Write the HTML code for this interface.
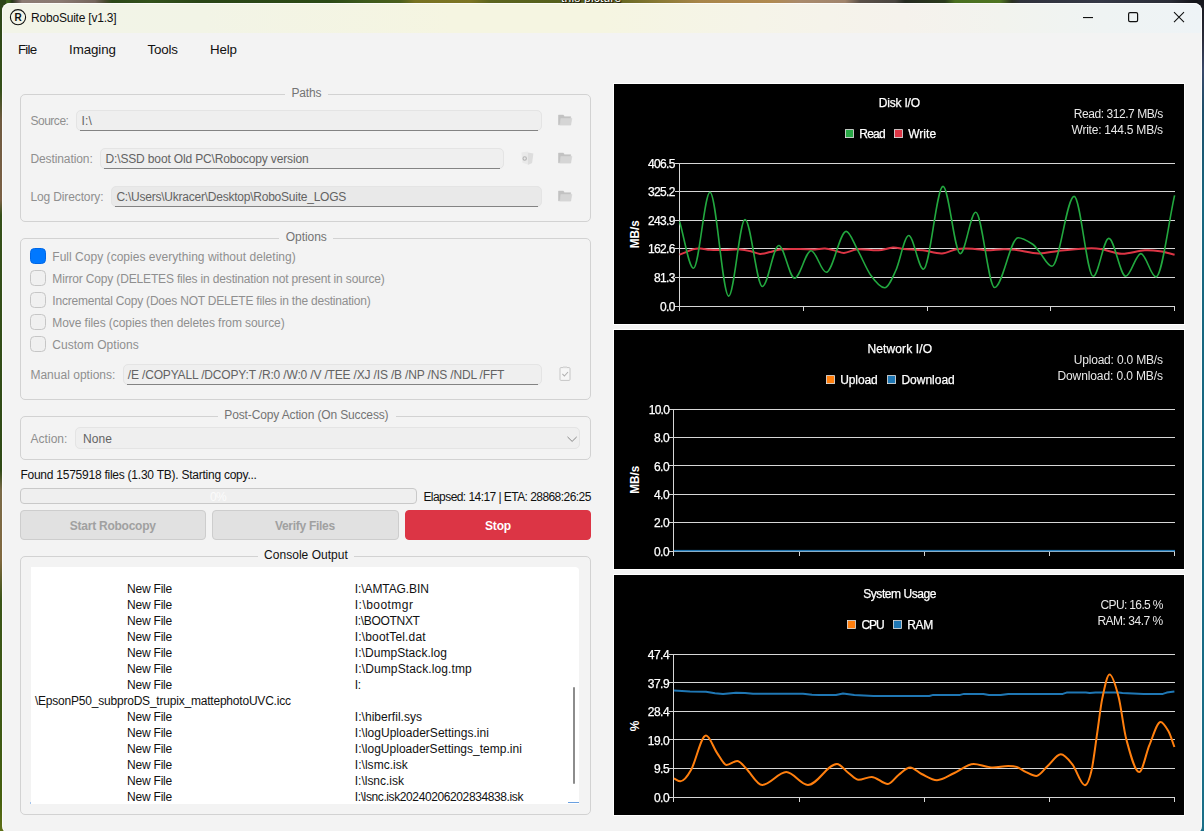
<!DOCTYPE html>
<html lang="en"><head><meta charset="utf-8"><title>RoboSuite [v1.3]</title>
<style>
html,body{margin:0;padding:0}
body{width:1204px;height:831px;overflow:hidden;position:relative;background:#2f4a1a;font-family:"Liberation Sans",sans-serif}
#wp-top{position:absolute;left:0;top:0;width:1204px;height:6px;overflow:hidden;background:linear-gradient(90deg,#3f6a1c 0,#3a5f1a 9px,#26381a 12px,#5a4f48 17px,#8b7b73 22px,#8a7a72 60px,#74655c 95px,#4a4a30 105px,#2c4717 112px,#33511b 150px,#2a4516 200px,#2b4a15 330px,#3d5a1c 365px,#4a5f1c 400px,#787222 415px,#7d7524 470px,#5c641e 490px,#55601c 555px,#6b6a25 625px,#8a7a35 660px,#a8854a 700px,#b08a50 770px,#a98a6c 800px,#a0846c 845px,#5a5048 860px,#4a4540 895px,#252a20 905px,#2a3a1c 945px,#4a7020 955px,#4f7522 1000px,#2a3020 1012px,#30323c 1020px,#353846 1100px,#2a2c36 1170px,#121318 1195px,#121318 1204px)}
#wp-left{position:absolute;left:0;top:0;width:6px;height:831px;background:linear-gradient(180deg,#2c4517 0,#35501a 90px,#6f5a40 120px,#7a6045 200px,#35501a 215px,#2f4a16 470px,#7a6a48 490px,#80683f 560px,#3a5518 600px,#3f5a14 740px,#47600f 800px,#5f7018 831px)}
#wp-right{position:absolute;left:1198px;top:0;width:6px;height:831px;background:linear-gradient(180deg,#15161c 0,#2a2c3a 40px,#3a4a6a 70px,#1d4f6a 110px,#17667f 200px,#176a84 600px,#1a6f88 831px)}
#win{position:absolute;left:2px;top:3px;width:1200px;height:830.5px;border-radius:8px;background:#f3f3f3;overflow:hidden}
#titlebar{position:absolute;left:0;top:0;width:1200px;height:30px;background:linear-gradient(90deg,#f2f4e8 0,#f2f4e6 200px,#f5f5e1 450px,#f5f5e1 600px,#f5f4e8 750px,#f5f2ec 900px,#f2f3ee 1000px,#eff3f3 1100px,#eef3f6 1200px)}
.abs{position:absolute;box-sizing:border-box}
.gb{position:absolute;box-sizing:border-box;border:1px solid #d2d2d2;border-radius:5px}
.gbt{position:absolute;background:#f3f3f3;height:4px}
.inp{position:absolute;box-sizing:border-box;background:#efefef;border:1px solid #e4e4e4;border-radius:5px}
.inp::after{content:"";position:absolute;left:2.7px;right:3.5px;bottom:-1px;height:1px;background:#838383}
.cb{position:absolute;box-sizing:border-box;width:16px;height:16px;border:1px solid #c6c6c6;border-radius:4.5px;background:#f0f0f0}
.cb.on{background:#0078ff;border-color:#0067e6}
.btn{position:absolute;box-sizing:border-box;height:30px;top:510px;border:1px solid #cdcdcd;border-radius:4px;background:#e1e1e1}
#texts .t{position:absolute;white-space:pre;line-height:16px;height:16px}
svg{position:absolute;left:0;top:0}
#texts .w{-webkit-text-stroke:0.25px #fff}
#wp-top span{position:absolute;left:561px;top:-8.3px;font:12px/12px "Liberation Sans",sans-serif;color:#fff;text-shadow:1px 1px 1px #000,0 0 2px #000;white-space:pre;letter-spacing:0.2px}
#ctexts{position:absolute;left:0;top:0;width:1204px;height:831px;will-change:transform}
#win::after{content:"";position:absolute;left:0;top:0;right:0;bottom:0;border:1px solid rgba(255,255,255,.75);border-radius:8px;box-sizing:border-box}

</style></head>
<body>
<div id="wp-top"><span>this picture</span></div><div id="wp-left"></div><div id="wp-right"></div>
<div id="win"><div id="titlebar"></div></div>
<!-- group boxes -->
<div class="gb" style="left:20px;top:94px;width:571px;height:128px"></div>
<div class="gbt" style="left:285px;top:92px;width:43px"></div>
<div class="gb" style="left:20px;top:238px;width:571px;height:162px"></div>
<div class="gbt" style="left:279px;top:236px;width:54px"></div>
<div class="gb" style="left:20px;top:416px;width:571px;height:44px"></div>
<div class="gbt" style="left:218px;top:414px;width:178px"></div>
<div class="gb" style="left:20px;top:556px;width:571px;height:259px"></div>
<div class="gbt" style="left:258px;top:554px;width:96px"></div>
<!-- inputs -->
<div class="inp" style="left:76px;top:110px;width:466px;height:21px"></div>
<div class="inp" style="left:100px;top:148px;width:404px;height:21px"></div>
<div class="inp" style="left:111px;top:186px;width:431px;height:21px;background:#e9e9e9"></div>
<div class="inp" style="left:123px;top:364px;width:419px;height:21px"></div>
<!-- checkboxes -->
<div class="cb on" style="left:30px;top:248px"></div>
<div class="cb" style="left:30px;top:270px"></div>
<div class="cb" style="left:30px;top:292px"></div>
<div class="cb" style="left:30px;top:314px"></div>
<div class="cb" style="left:30px;top:336px"></div>
<!-- combo -->
<div class="abs" style="left:75px;top:427px;width:505px;height:22px;background:#efefef;border:1px solid #e4e4e4;border-radius:5px"></div>
<!-- progress -->
<div class="abs" style="left:20px;top:488px;width:397px;height:16px;background:#efefef;border:1px solid #c9c9c9;border-radius:4px"></div>
<!-- buttons -->
<div class="btn" style="left:20px;width:186px"></div>
<div class="btn" style="left:212px;width:187px"></div>
<div class="btn" style="left:405px;width:186px;background:#dc3545;border-color:#dc3545"></div>
<!-- console -->
<div class="abs" style="left:31px;top:567px;width:548px;height:237px;background:#fff;border-radius:0 4px 0 0"></div>
<div class="abs" style="left:573.2px;top:687px;width:1.6px;height:97px;background:#8c8c8c;border-radius:1px"></div>
<div class="abs" style="left:568px;top:802px;width:11px;height:1px;background:#6aa0e0"></div>
<div class="abs" style="left:30px;top:802px;width:1px;height:1.7px;background:#a4c4ec"></div>
<!-- icons -->
<svg id="icons" width="1204" height="831" viewBox="0 0 1204 831" font-family="Liberation Sans, sans-serif">
<!-- app icon -->
<circle cx="18" cy="17.2" r="7.6" fill="none" stroke="#111" stroke-width="1.1"/>
<text x="18.1" y="20.8" text-anchor="middle" font-size="10" font-weight="700" fill="#111">R</text>
<!-- window controls -->
<rect x="1083" y="17" width="10" height="1.1" fill="#111"/>
<rect x="1128.6" y="12.6" width="9" height="9" rx="1.4" fill="none" stroke="#111" stroke-width="1.2"/>
<path d="M1174,12.2 L1184,22.2 M1184,12.2 L1174,22.2" stroke="#111" stroke-width="1.1" fill="none"/>
<!-- folders -->
<g transform="translate(558,114.6)"><path d="M0.5,0.5 h4.9 l1,1.6 h6.2 v8.1 h-12.1 z" fill="#c2c2c2" stroke="#c2c2c2" stroke-width="0.6" stroke-linejoin="round"/><path d="M2.9,3.8 h11 l-1.3,6.5 h-10.6 z" fill="#d5d5d5" stroke="#d5d5d5" stroke-width="0.6" stroke-linejoin="round"/></g><g transform="translate(558,152.6)"><path d="M0.5,0.5 h4.9 l1,1.6 h6.2 v8.1 h-12.1 z" fill="#c2c2c2" stroke="#c2c2c2" stroke-width="0.6" stroke-linejoin="round"/><path d="M2.9,3.8 h11 l-1.3,6.5 h-10.6 z" fill="#d5d5d5" stroke="#d5d5d5" stroke-width="0.6" stroke-linejoin="round"/></g><g transform="translate(558,190.6)"><path d="M0.5,0.5 h4.9 l1,1.6 h6.2 v8.1 h-12.1 z" fill="#c2c2c2" stroke="#c2c2c2" stroke-width="0.6" stroke-linejoin="round"/><path d="M2.9,3.8 h11 l-1.3,6.5 h-10.6 z" fill="#d5d5d5" stroke="#d5d5d5" stroke-width="0.6" stroke-linejoin="round"/></g>
<!-- trash -->
<path d="M521.4,152.4 L527.9,151.5 L527.9,164.6 L522.4,162.7 Z" fill="#e9e9e9"/>
<path d="M527.9,152.6 L533.4,153.6 L532.1,162.9 L527.9,164.9 Z" fill="#dddddd"/>
<circle cx="524.7" cy="158.5" r="1.7" fill="none" stroke="#b4b4b4" stroke-width="1.1"/>
<!-- clipboard -->
<rect x="560" y="367.6" width="10" height="12.8" rx="1" fill="#f6f6f6" stroke="#c6c6c6" stroke-width="1"/>
<rect x="563" y="366.4" width="4" height="1.6" fill="#d8d8d8"/>
<path d="M562.4,373.8 l2,2.2 l3.6,-4" fill="none" stroke="#b0b0b0" stroke-width="1.1"/>
<!-- chevron -->
<path d="M567.5,436.9 l4.6,4.5 l4.6,-4.5" fill="none" stroke="#868686" stroke-width="1"/>
</svg>

<svg width="1204" height="831" viewBox="0 0 1204 831" font-family="Liberation Sans, sans-serif">
<rect x="613" y="83" width="572" height="242" fill="#fff"/>
<rect x="614" y="84" width="570" height="240" fill="#000"/>
<rect x="675" y="163" width="500" height="1" fill="#d6d6d6"/>
<rect x="675" y="191" width="500" height="1" fill="#d6d6d6"/>
<rect x="675" y="220" width="500" height="1" fill="#d6d6d6"/>
<rect x="675" y="248" width="500" height="1" fill="#d6d6d6"/>
<rect x="675" y="277" width="500" height="1" fill="#d6d6d6"/>
<rect x="675" y="306" width="500" height="1" fill="#d6d6d6"/>
<rect x="679" y="163" width="1" height="144" fill="#d6d6d6"/>
<rect x="679" y="306" width="1" height="5" fill="#d6d6d6"/>
<rect x="803" y="306" width="1" height="5" fill="#d6d6d6"/>
<rect x="927" y="306" width="1" height="5" fill="#d6d6d6"/>
<rect x="1050" y="306" width="1" height="5" fill="#d6d6d6"/>
<rect x="1174" y="306" width="1" height="5" fill="#d6d6d6"/>
<path d="M679.6,254.6C681.7,253.8 683.9,252.9 686.0,252.1C688.3,251.2 690.7,250.0 693.0,249.4C695.3,248.8 697.7,248.5 700.0,248.6C703.3,248.7 706.7,249.6 710.0,249.8C715.0,250.1 720.0,250.0 725.0,249.9C730.0,249.8 735.0,249.2 740.0,249.4C743.3,249.6 746.7,250.3 750.0,251.1C753.3,251.8 756.7,253.7 760.0,253.9C763.3,254.1 766.7,252.8 770.0,252.1C773.3,251.3 776.7,249.7 780.0,249.4C786.7,248.7 793.3,249.1 800.0,249.1C805.0,249.1 810.0,249.5 815.0,249.4C818.3,249.3 821.7,248.4 825.0,248.6C828.3,248.8 831.7,249.8 835.0,250.6C838.0,251.3 841.0,253.2 844.0,253.0C848.4,252.7 852.9,249.6 857.3,249.3C864.4,248.7 871.4,250.6 878.5,250.3C883.3,250.1 888.2,247.9 893.0,247.6C896.5,247.4 900.0,248.6 903.5,248.9C909.9,249.5 916.4,249.5 922.8,250.3C929.2,251.0 935.6,253.7 942.0,253.4C947.1,253.2 952.3,249.6 957.4,248.9C963.2,248.1 969.0,248.6 974.8,248.9C978.6,249.1 982.5,250.2 986.3,250.3C992.1,250.4 997.9,249.4 1003.7,249.3C1007.5,249.2 1011.2,249.4 1015.0,249.8C1023.0,250.7 1030.9,253.2 1038.9,253.4C1045.3,253.6 1051.6,251.6 1058.0,250.9C1067.7,249.9 1077.3,248.9 1087.0,248.4C1091.5,248.2 1096.0,248.2 1100.5,248.9C1107.6,250.0 1114.6,253.6 1121.7,253.8C1129.4,254.0 1137.1,250.8 1144.8,250.3C1149.9,250.0 1154.9,250.5 1160.0,251.2C1164.9,251.9 1169.7,253.5 1174.6,254.7" fill="none" stroke="#dc3545" stroke-width="2" stroke-linejoin="round"/>
<path d="M679.6,221.4C684.2,237.0 688.9,268.2 693.5,268.2C699.0,268.2 704.5,192.2 710.0,192.2C716.2,192.2 722.5,296.1 728.7,296.1C734.1,296.1 739.6,219.5 745.0,219.5C750.8,219.5 756.6,286.5 762.4,286.5C767.9,286.5 773.3,245.5 778.8,245.5C784.1,245.5 789.3,278.2 794.6,278.2C800.1,278.2 805.6,250.7 811.1,250.7C816.2,250.7 821.2,272.3 826.3,272.3C832.9,272.3 839.6,231.4 846.2,231.4C849.9,231.4 853.6,242.7 857.3,249.3C861.8,257.3 866.3,269.0 870.8,275.3C875.4,281.8 880.1,287.8 884.7,287.8C888.4,287.8 892.1,278.6 895.8,270.5C900.1,261.1 904.4,235.5 908.7,235.5C913.6,235.5 918.5,269.2 923.4,269.2C929.9,269.2 936.5,186.4 943.0,186.4C948.8,186.4 954.5,253.6 960.3,253.6C965.4,253.6 970.6,212.2 975.7,212.2C982.0,212.2 988.3,287.5 994.6,287.5C1002.4,287.5 1010.3,237.8 1018.1,237.8C1023.1,237.8 1028.1,241.3 1033.1,244.5C1035.0,245.8 1037.0,249.1 1038.9,251.3C1043.3,256.3 1047.6,266.3 1052.0,266.3C1059.4,266.3 1066.7,196.4 1074.1,196.4C1080.5,196.4 1086.8,276.3 1093.2,276.3C1098.4,276.3 1103.6,238.4 1108.8,238.4C1114.4,238.4 1120.1,276.3 1125.7,276.3C1130.8,276.3 1135.8,253.6 1140.9,253.6C1145.9,253.6 1150.9,276.9 1155.9,276.9C1162.1,276.9 1168.4,222.6 1174.6,195.4" fill="none" stroke="#22a83f" stroke-width="1.6" stroke-linejoin="round"/>
<rect x="845.4" y="129.6" width="8" height="8" fill="#28a745" stroke="#e8e8e8" stroke-width="0.8"/>
<rect x="894.4" y="129.6" width="8" height="8" fill="#dc3545" stroke="#e8e8e8" stroke-width="0.8"/>
<text x="0" y="0" transform="translate(639.0,234.3) rotate(-90)" text-anchor="middle" font-size="12" font-weight="700" fill="#fff" textLength="28" lengthAdjust="spacingAndGlyphs">MB/s</text>
<rect x="613" y="329" width="572" height="241" fill="#fff"/>
<rect x="614" y="330" width="570" height="239" fill="#000"/>
<rect x="669" y="409" width="506" height="1" fill="#d6d6d6"/>
<rect x="669" y="437" width="506" height="1" fill="#d6d6d6"/>
<rect x="669" y="465" width="506" height="1" fill="#d6d6d6"/>
<rect x="669" y="494" width="506" height="1" fill="#d6d6d6"/>
<rect x="669" y="522" width="506" height="1" fill="#d6d6d6"/>
<rect x="669" y="551" width="506" height="1" fill="#d6d6d6"/>
<rect x="673" y="409" width="1" height="143" fill="#d6d6d6"/>
<rect x="673" y="551" width="1" height="5" fill="#d6d6d6"/>
<rect x="799" y="551" width="1" height="5" fill="#d6d6d6"/>
<rect x="924" y="551" width="1" height="5" fill="#d6d6d6"/>
<rect x="1049" y="551" width="1" height="5" fill="#d6d6d6"/>
<rect x="1174" y="551" width="1" height="5" fill="#d6d6d6"/>
<rect x="674" y="549.9" width="501" height="1.5" fill="#1f77b4"/>
<rect x="826.5" y="375.6" width="8" height="8" fill="#ff7f0e" stroke="#e8e8e8" stroke-width="0.8"/>
<rect x="887.6" y="375.6" width="8" height="8" fill="#1f77b4" stroke="#e8e8e8" stroke-width="0.8"/>
<text x="0" y="0" transform="translate(639.0,479.8) rotate(-90)" text-anchor="middle" font-size="12" font-weight="700" fill="#fff" textLength="28" lengthAdjust="spacingAndGlyphs">MB/s</text>
<rect x="613" y="574" width="572" height="242" fill="#fff"/>
<rect x="614" y="575" width="570" height="240" fill="#000"/>
<rect x="669" y="654" width="506" height="1" fill="#d6d6d6"/>
<rect x="669" y="682" width="506" height="1" fill="#d6d6d6"/>
<rect x="669" y="711" width="506" height="1" fill="#d6d6d6"/>
<rect x="669" y="739" width="506" height="1" fill="#d6d6d6"/>
<rect x="669" y="768" width="506" height="1" fill="#d6d6d6"/>
<rect x="669" y="797" width="506" height="1" fill="#d6d6d6"/>
<rect x="673" y="654" width="1" height="144" fill="#d6d6d6"/>
<rect x="673" y="797" width="1" height="5" fill="#d6d6d6"/>
<rect x="799" y="797" width="1" height="5" fill="#d6d6d6"/>
<rect x="924" y="797" width="1" height="5" fill="#d6d6d6"/>
<rect x="1049" y="797" width="1" height="5" fill="#d6d6d6"/>
<rect x="1174" y="797" width="1" height="5" fill="#d6d6d6"/>
<path d="M673.9,690.6 L690.0,691.5 L706.0,691.8 L715.0,693.2 L723.0,694.1 L736.0,692.7 L745.0,692.9 L753.0,693.7 L803.0,693.7 L812.0,694.8 L819.0,695.1 L836.0,695.0 L843.0,693.6 L854.3,695.1 L873.5,696.0 L929.3,696.0 L933.2,694.9 L960.1,694.9 L964.0,693.9 L983.3,693.9 L989.0,695.1 L1000.6,695.1 L1008.3,693.9 L1062.8,693.9 L1066.6,692.6 L1085.9,692.6 L1089.7,693.1 L1095.5,692.6 L1118.6,692.6 L1122.4,693.1 L1143.6,693.9 L1162.9,693.9 L1166.7,692.6 L1174.4,691.6" fill="none" stroke="#1f77b4" stroke-width="2" stroke-linejoin="round"/>
<path d="M673.9,778.4C676.1,779.4 678.2,781.3 680.4,781.3C683.9,781.3 687.5,776.4 691.0,770.1C696.0,761.2 701.0,735.5 706.0,735.5C709.7,735.5 713.3,747.6 717.0,752.8C720.2,757.4 723.4,764.9 726.6,764.9C730.1,764.9 733.7,760.9 737.2,760.9C740.1,760.9 743.0,765.4 745.9,768.2C751.3,773.4 756.8,785.0 762.2,785.0C770.2,785.0 778.3,772.1 786.3,772.1C793.5,772.1 800.7,785.0 807.9,785.0C817.6,785.0 827.2,764.0 836.9,764.0C840.8,764.0 844.6,770.2 848.5,773.0C851.8,775.4 855.2,779.8 858.5,779.8C862.9,779.8 867.2,776.9 871.6,776.9C877.0,776.9 882.5,784.0 887.9,784.0C891.4,784.0 895.0,777.6 898.5,775.0C902.4,772.1 906.2,767.4 910.1,767.4C913.9,767.4 917.8,772.2 921.6,774.0C926.7,776.4 931.9,780.2 937.0,780.2C942.8,780.2 948.6,775.6 954.4,773.0C960.8,770.2 967.2,764.0 973.6,764.0C978.1,764.0 982.6,765.9 987.1,766.7C989.0,767.0 991.0,767.4 992.9,767.4C998.0,767.4 1003.2,765.9 1008.3,765.9C1011.1,765.9 1013.8,765.9 1016.6,766.9C1019.8,768.0 1023.0,770.6 1026.2,772.1C1029.6,773.6 1033.0,775.9 1036.4,775.9C1040.1,775.9 1043.7,769.6 1047.4,766.3C1051.9,762.3 1056.3,754.2 1060.8,754.2C1064.7,754.2 1068.5,759.4 1072.4,764.4C1076.6,769.8 1080.7,785.2 1084.9,785.2C1087.1,785.2 1089.4,779.7 1091.6,770.1C1093.5,761.8 1095.5,744.6 1097.4,731.6C1099.0,720.9 1100.6,706.5 1102.2,698.9C1104.6,687.4 1107.1,674.5 1109.5,674.5C1112.5,674.5 1115.6,685.3 1118.6,697.0C1121.2,706.9 1123.7,729.9 1126.3,739.3C1130.6,755.0 1134.9,772.1 1139.2,772.1C1142.6,772.1 1146.0,753.1 1149.4,745.1C1153.1,736.4 1156.9,722.0 1160.6,722.0C1163.3,722.0 1165.9,726.8 1168.6,731.6C1170.5,735.1 1172.5,741.9 1174.4,747.0" fill="none" stroke="#ff7f0e" stroke-width="2" stroke-linejoin="round"/>
<rect x="847.4" y="620.6" width="8" height="8" fill="#ff7f0e" stroke="#e8e8e8" stroke-width="0.8"/>
<rect x="893.4" y="620.6" width="8" height="8" fill="#1f77b4" stroke="#e8e8e8" stroke-width="0.8"/>
<text x="0" y="0" transform="translate(639.0,725.9) rotate(-90)" text-anchor="middle" font-size="12" font-weight="700" fill="#fff">%</text>
</svg>
<div id="texts">
<span class="t" style="left:31.1px;top:9.9px;font-size:12px;letter-spacing:-0.215px;color:#111;">RoboSuite [v1.3]</span>
<span class="t" style="left:17.9px;top:42.0px;font-size:13.33px;letter-spacing:-0.696px;color:#111;">File</span>
<span class="t" style="left:69.0px;top:42.0px;font-size:13.33px;letter-spacing:-0.075px;color:#111;">Imaging</span>
<span class="t" style="left:147.5px;top:42.0px;font-size:13.33px;letter-spacing:-0.185px;color:#111;">Tools</span>
<span class="t" style="left:210.0px;top:42.0px;font-size:13.33px;letter-spacing:-0.180px;color:#111;">Help</span>
<span class="t" style="left:291.5px;top:85.0px;font-size:12px;letter-spacing:-0.198px;color:#747474;">Paths</span>
<span class="t" style="left:30.4px;top:112.5px;font-size:12px;letter-spacing:-0.466px;color:#8f8f8f;">Source:</span>
<span class="t" style="left:81.5px;top:112.5px;font-size:12px;letter-spacing:0.161px;color:#636363;">I:\</span>
<span class="t" style="left:30.4px;top:150.5px;font-size:12px;letter-spacing:-0.090px;color:#8f8f8f;">Destination:</span>
<span class="t" style="left:105.5px;top:150.5px;font-size:12px;letter-spacing:-0.146px;color:#636363;">D:\SSD boot Old PC\Robocopy version</span>
<span class="t" style="left:30.4px;top:188.5px;font-size:12px;letter-spacing:-0.122px;color:#8f8f8f;">Log Directory:</span>
<span class="t" style="left:116.4px;top:188.5px;font-size:12px;letter-spacing:-0.232px;color:#636363;">C:\Users\Ukracer\Desktop\RoboSuite_LOGS</span>
<span class="t" style="left:285.8px;top:229.3px;font-size:12px;letter-spacing:-0.066px;color:#747474;">Options</span>
<span class="t" style="left:52.3px;top:248.5px;font-size:12px;letter-spacing:0.030px;color:#8f8f8f;">Full Copy (copies everything without deleting)</span>
<span class="t" style="left:52.3px;top:270.5px;font-size:12px;letter-spacing:-0.163px;color:#8f8f8f;">Mirror Copy (DELETES files in destination not present in source)</span>
<span class="t" style="left:52.3px;top:292.5px;font-size:12px;letter-spacing:-0.210px;color:#8f8f8f;">Incremental Copy (Does NOT DELETE files in the destination)</span>
<span class="t" style="left:52.3px;top:314.5px;font-size:12px;letter-spacing:-0.071px;color:#8f8f8f;">Move files (copies then deletes from source)</span>
<span class="t" style="left:52.3px;top:336.5px;font-size:12px;letter-spacing:0.032px;color:#8f8f8f;">Custom Options</span>
<span class="t" style="left:30.4px;top:366.5px;font-size:12px;letter-spacing:0.018px;color:#8f8f8f;">Manual options:</span>
<span class="t" style="left:127.8px;top:366.5px;font-size:12px;letter-spacing:-0.167px;color:#636363;">/E /COPYALL /DCOPY:T /R:0 /W:0 /V /TEE /XJ /IS /B /NP /NS /NDL /FFT</span>
<span class="t" style="left:224.3px;top:407.0px;font-size:12px;letter-spacing:-0.134px;color:#747474;">Post-Copy Action (On Success)</span>
<span class="t" style="left:30.4px;top:430.5px;font-size:12px;letter-spacing:0.059px;color:#8f8f8f;">Action:</span>
<span class="t" style="left:83.0px;top:430.5px;font-size:12px;letter-spacing:0.103px;color:#636363;">None</span>
<span class="t" style="left:20.4px;top:467.0px;font-size:12px;letter-spacing:-0.243px;color:#111;">Found 1575918 files (1.30 TB). Starting copy...</span>
<span class="t" style="left:210.1px;top:488.8px;font-size:12px;letter-spacing:-0.672px;color:#fbfbfb;">0%</span>
<span class="t" style="left:423.4px;top:488.5px;font-size:12px;letter-spacing:-0.555px;color:#111;">Elapsed: 14:17 | ETA: 28868:26:25</span>
<span class="t" style="left:69.8px;top:517.5px;font-size:12px;letter-spacing:-0.246px;color:#a0a0a0;font-weight:700;">Start Robocopy</span>
<span class="t" style="left:274.9px;top:517.5px;font-size:12px;letter-spacing:-0.281px;color:#a0a0a0;font-weight:700;">Verify Files</span>
<span class="t" style="left:484.9px;top:517.5px;font-size:12px;letter-spacing:-0.118px;color:#fff;font-weight:700;">Stop</span>
<span class="t" style="left:264.1px;top:547.0px;font-size:12px;letter-spacing:0.022px;color:#111;">Console Output</span>
<span class="t con" style="left:127.1px;top:581.0px;font-size:12px;letter-spacing:-0.223px;color:#111;">New File</span>
<span class="t con" style="left:354.8px;top:581.0px;font-size:12px;letter-spacing:-0.094px;color:#111;">I:\AMTAG.BIN</span>
<span class="t con" style="left:127.1px;top:597.0px;font-size:12px;letter-spacing:-0.223px;color:#111;">New File</span>
<span class="t con" style="left:354.8px;top:597.0px;font-size:12px;letter-spacing:0.457px;color:#111;">I:\bootmgr</span>
<span class="t con" style="left:127.1px;top:613.0px;font-size:12px;letter-spacing:-0.223px;color:#111;">New File</span>
<span class="t con" style="left:354.8px;top:613.0px;font-size:12px;letter-spacing:-0.322px;color:#111;">I:\BOOTNXT</span>
<span class="t con" style="left:127.1px;top:629.0px;font-size:12px;letter-spacing:-0.223px;color:#111;">New File</span>
<span class="t con" style="left:354.8px;top:629.0px;font-size:12px;letter-spacing:0.163px;color:#111;">I:\bootTel.dat</span>
<span class="t con" style="left:127.1px;top:645.0px;font-size:12px;letter-spacing:-0.223px;color:#111;">New File</span>
<span class="t con" style="left:354.8px;top:645.0px;font-size:12px;letter-spacing:0.052px;color:#111;">I:\DumpStack.log</span>
<span class="t con" style="left:127.1px;top:661.0px;font-size:12px;letter-spacing:-0.223px;color:#111;">New File</span>
<span class="t con" style="left:354.8px;top:661.0px;font-size:12px;letter-spacing:0.119px;color:#111;">I:\DumpStack.log.tmp</span>
<span class="t con" style="left:127.1px;top:677.0px;font-size:12px;letter-spacing:-0.223px;color:#111;">New File</span>
<span class="t con" style="left:354.8px;top:677.0px;font-size:12px;letter-spacing:-0.436px;color:#111;">I:</span>
<span class="t con" style="left:34.9px;top:693.0px;font-size:12px;letter-spacing:-0.208px;color:#111;">\EpsonP50_subproDS_trupix_mattephotoUVC.icc</span>
<span class="t con" style="left:127.1px;top:709.0px;font-size:12px;letter-spacing:-0.223px;color:#111;">New File</span>
<span class="t con" style="left:354.8px;top:709.0px;font-size:12px;letter-spacing:0.041px;color:#111;">I:\hiberfil.sys</span>
<span class="t con" style="left:127.1px;top:725.0px;font-size:12px;letter-spacing:-0.223px;color:#111;">New File</span>
<span class="t con" style="left:354.8px;top:725.0px;font-size:12px;letter-spacing:0.026px;color:#111;">I:\logUploaderSettings.ini</span>
<span class="t con" style="left:127.1px;top:741.0px;font-size:12px;letter-spacing:-0.223px;color:#111;">New File</span>
<span class="t con" style="left:354.8px;top:741.0px;font-size:12px;letter-spacing:0.008px;color:#111;">I:\logUploaderSettings_temp.ini</span>
<span class="t con" style="left:127.1px;top:757.0px;font-size:12px;letter-spacing:-0.223px;color:#111;">New File</span>
<span class="t con" style="left:354.8px;top:757.0px;font-size:12px;letter-spacing:0.039px;color:#111;">I:\lsmc.isk</span>
<span class="t con" style="left:127.1px;top:773.0px;font-size:12px;letter-spacing:-0.223px;color:#111;">New File</span>
<span class="t con" style="left:354.8px;top:773.0px;font-size:12px;letter-spacing:-0.022px;color:#111;">I:\lsnc.isk</span>
<span class="t con" style="left:127.1px;top:789.0px;font-size:12px;letter-spacing:-0.223px;color:#111;">New File</span>
<span class="t con" style="left:354.8px;top:789.0px;font-size:12px;letter-spacing:-0.394px;color:#111;">I:\lsnc.isk20240206202834838.isk</span>
<div id="ctexts">
<span class="t w" style="left:878.7px;top:94.8px;font-size:12px;letter-spacing:-0.184px;color:#fff;">Disk I/O</span>
<span class="t w" style="left:859.3px;top:125.6px;font-size:12px;letter-spacing:-0.772px;color:#fff;">Read</span>
<span class="t w" style="left:908.2px;top:125.6px;font-size:12px;letter-spacing:0.024px;color:#fff;">Write</span>
<span class="t" style="left:1073.7px;top:106.2px;font-size:12px;letter-spacing:-0.435px;color:#e8e8e8;">Read: 312.7 MB/s</span>
<span class="t" style="left:1071.5px;top:121.7px;font-size:12px;letter-spacing:-0.227px;color:#e8e8e8;">Write: 144.5 MB/s</span>
<span class="t w" style="left:867.4px;top:340.8px;font-size:12px;letter-spacing:0.131px;color:#fff;">Network I/O</span>
<span class="t w" style="left:840.2px;top:371.6px;font-size:12px;letter-spacing:-0.089px;color:#fff;">Upload</span>
<span class="t w" style="left:901.4px;top:371.6px;font-size:12px;letter-spacing:0.003px;color:#fff;">Download</span>
<span class="t" style="left:1073.7px;top:352.1px;font-size:12px;letter-spacing:-0.184px;color:#e8e8e8;">Upload: 0.0 MB/s</span>
<span class="t" style="left:1057.5px;top:367.7px;font-size:12px;letter-spacing:-0.116px;color:#e8e8e8;">Download: 0.0 MB/s</span>
<span class="t w" style="left:863.2px;top:585.8px;font-size:12px;letter-spacing:-0.428px;color:#fff;">System Usage</span>
<span class="t w" style="left:861.5px;top:616.6px;font-size:12px;letter-spacing:-1.081px;color:#fff;">CPU</span>
<span class="t w" style="left:907.2px;top:616.6px;font-size:12px;letter-spacing:-0.357px;color:#fff;">RAM</span>
<span class="t" style="left:1100.6px;top:597.0px;font-size:12px;letter-spacing:-0.652px;color:#e8e8e8;">CPU: 16.5 %</span>
<span class="t" style="left:1097.4px;top:612.6px;font-size:12px;letter-spacing:-0.482px;color:#e8e8e8;">RAM: 34.7 %</span>
<span class="t yl w" style="left:647.9px;top:155.6px;font-size:12px;letter-spacing:-0.606px;color:#fff;">406.5</span>
<span class="t yl w" style="left:647.9px;top:184.4px;font-size:12px;letter-spacing:-0.606px;color:#fff;">325.2</span>
<span class="t yl w" style="left:647.9px;top:212.8px;font-size:12px;letter-spacing:-0.606px;color:#fff;">243.9</span>
<span class="t yl w" style="left:647.9px;top:241.4px;font-size:12px;letter-spacing:-0.606px;color:#fff;">162.6</span>
<span class="t yl w" style="left:653.9px;top:269.7px;font-size:12px;letter-spacing:-0.590px;color:#fff;">81.3</span>
<span class="t yl w" style="left:660.0px;top:298.5px;font-size:12px;letter-spacing:-0.596px;color:#fff;">0.0</span>
<span class="t yl w" style="left:648.8px;top:401.6px;font-size:12px;letter-spacing:-0.765px;color:#fff;">10.0</span>
<span class="t yl w" style="left:653.9px;top:429.8px;font-size:12px;letter-spacing:-0.496px;color:#fff;">8.0</span>
<span class="t yl w" style="left:653.9px;top:458.7px;font-size:12px;letter-spacing:-0.496px;color:#fff;">6.0</span>
<span class="t yl w" style="left:653.9px;top:486.8px;font-size:12px;letter-spacing:-0.496px;color:#fff;">4.0</span>
<span class="t yl w" style="left:653.9px;top:515.0px;font-size:12px;letter-spacing:-0.496px;color:#fff;">2.0</span>
<span class="t yl w" style="left:653.9px;top:543.6px;font-size:12px;letter-spacing:-0.496px;color:#fff;">0.0</span>
<span class="t yl w" style="left:647.8px;top:647.2px;font-size:12px;letter-spacing:-0.515px;color:#fff;">47.4</span>
<span class="t yl w" style="left:647.8px;top:675.7px;font-size:12px;letter-spacing:-0.515px;color:#fff;">37.9</span>
<span class="t yl w" style="left:647.8px;top:703.9px;font-size:12px;letter-spacing:-0.515px;color:#fff;">28.4</span>
<span class="t yl w" style="left:647.8px;top:732.5px;font-size:12px;letter-spacing:-0.515px;color:#fff;">19.0</span>
<span class="t yl w" style="left:653.9px;top:760.6px;font-size:12px;letter-spacing:-0.496px;color:#fff;">9.5</span>
<span class="t yl w" style="left:653.9px;top:789.6px;font-size:12px;letter-spacing:-0.496px;color:#fff;">0.0</span>
</div>
</div>
</body></html>
